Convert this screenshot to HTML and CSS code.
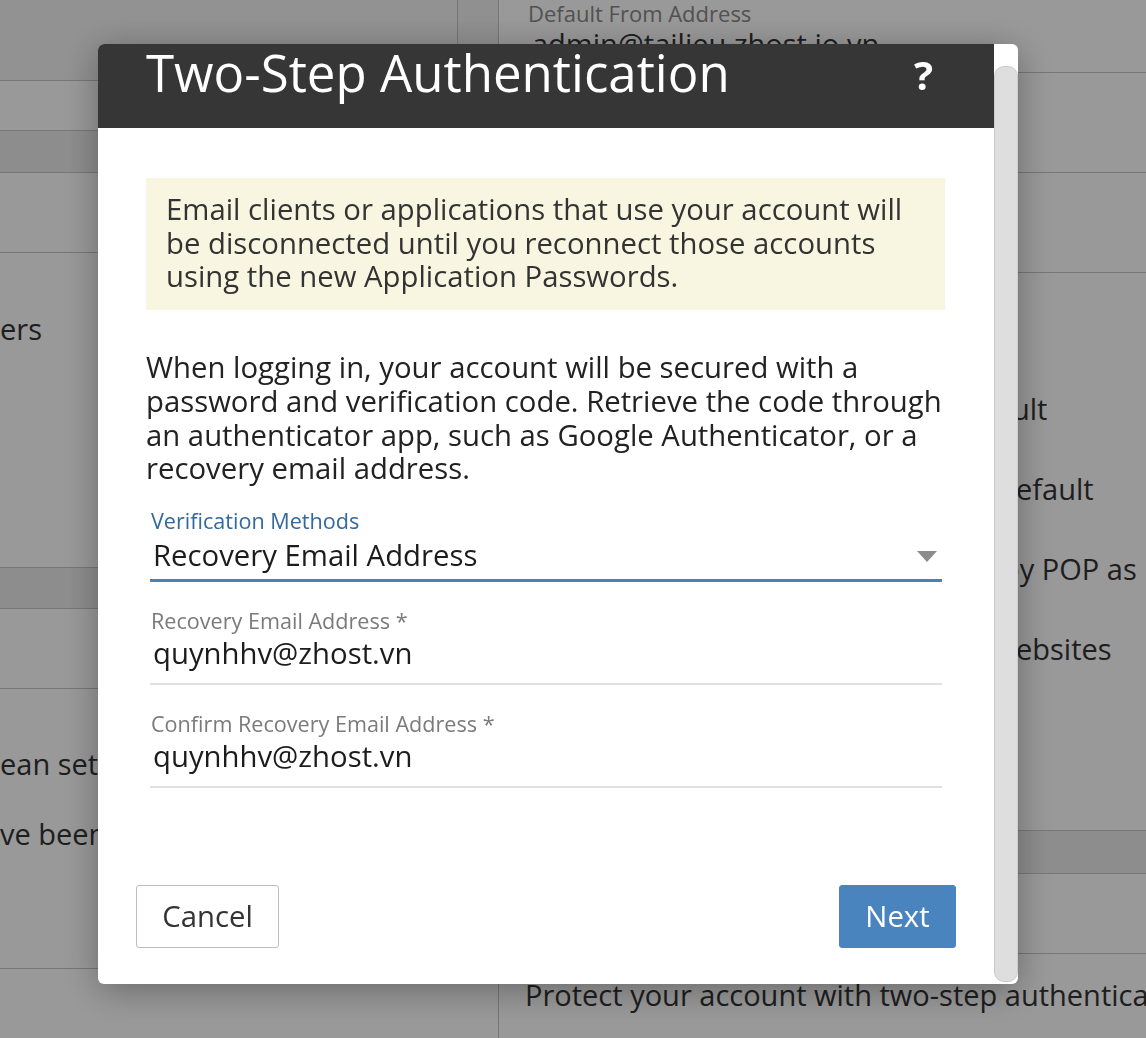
FILE: index.html
```html
<!DOCTYPE html>
<html lang="en">
<head>
<meta charset="utf-8">
<title>Two-Step Authentication</title>
<link rel="stylesheet" href="styles.css">
</head>
<body>
<div class="page">
  <aside class="left-col">
    <div class="l-head"></div>
    <div class="l-row-a"></div>
    <div class="l-band"></div>
    <div class="l-row-b"></div>
    <div class="l-section">
      <p class="frag">ers</p>
    </div>
    <div class="l-band l-band-2"></div>
    <div class="l-row-b"></div>
    <div class="l-section l-section-2">
      <p class="frag">ean settings</p>
      <p class="frag frag-gap">ve been read</p>
    </div>
  </aside>
  <div class="gutter"><div class="gutter-top"></div></div>
  <main class="right-col">
    <div class="r-head">
      <div class="r-label">Default From Address</div>
      <div class="r-value">admin@tailieu.zhost.io.vn</div>
    </div>
    <div class="r-row"></div>
    <div class="r-row"></div>
    <div class="r-list">
      <p class="frag r-item r-item-a">ult</p>
      <p class="frag r-item">efault</p>
      <p class="frag r-item r-item-b">by POP as read</p>
      <p class="frag r-item">ebsites</p>
    </div>
    <div class="r-band"></div>
    <div class="r-row r-row-2"></div>
    <div class="r-foot">
      <p class="frag">Protect your account with two-step authentication</p>
    </div>
  </main>
</div>

<div class="overlay"></div>

<div class="dialog" role="dialog" aria-labelledby="dlg-title">
  <div class="dialog-main">
    <header class="dialog-head">
      <h1 class="dialog-title" id="dlg-title">Two-Step Authentication</h1>
      <span class="help">?</span>
    </header>
    <div class="dialog-body">
      <p class="notice">Email clients or applications that use your account will be disconnected until you reconnect those accounts using the new Application Passwords.</p>
      <p class="intro">When logging in, your account will be secured with a password and verification code. Retrieve the code through an authenticator app, such as Google Authenticator, or a recovery email address.</p>

      <div class="field field-select">
        <label class="field-label field-label-active">Verification Methods</label>
        <div class="field-value select-value">
          <span>Recovery Email Address</span>
          <svg class="caret" width="20" height="11" viewBox="0 0 20 11" aria-hidden="true"><polygon points="0,0 20,0 10,11" fill="#8c8c8c"/></svg>
        </div>
      </div>

      <div class="field">
        <label class="field-label">Recovery Email Address *</label>
        <div class="field-value input-value">quynhhv@zhost.vn</div>
      </div>

      <div class="field">
        <label class="field-label">Confirm Recovery Email Address *</label>
        <div class="field-value input-value">quynhhv@zhost.vn</div>
      </div>
    </div>
    <footer class="dialog-foot">
      <button class="btn btn-cancel" type="button">Cancel</button>
      <button class="btn btn-next" type="button">Next</button>
    </footer>
  </div>
  <div class="scrollbar"><div class="thumb"></div></div>
</div>
</body>
</html>
```

FILE: styles.css
```css
* { box-sizing: border-box; }

html, body {
  margin: 0;
  padding: 0;
}

body {
  width: 1146px;
  height: 1038px;
  overflow: hidden;
  background: #fff;
  color: #333;
  font-family: "Open Sans", "Noto Sans", "DejaVu Sans", sans-serif;
}

/* ---------- background page ---------- */
.page {
  display: flex;
  height: 1038px;
}

.left-col {
  width: 457px;
  flex: none;
  display: flex;
  flex-direction: column;
  overflow: hidden;
}

.gutter {
  width: 42px;
  flex: none;
  border-right: 1px solid #c6c6c6;
}
.gutter-top {
  height: 73px;
  background: #f0f0f0;
  border-left: 1px solid #c6c6c6;
}

.right-col {
  flex: 1;
  min-width: 0;
  display: flex;
  flex-direction: column;
  overflow: hidden;
}

.frag {
  margin: 0;
  font-size: 29px;
  line-height: 34px;
  color: #333;
  white-space: nowrap;
}

.l-head {
  height: 81px;
  background: #f3f3f3;
  border-bottom: 1px solid #c8c8c8;
}
.l-row-a {
  height: 50px;
  border-bottom: 1px solid #c8c8c8;
}
.l-band {
  height: 42px;
  background: #ececec;
  border-bottom: 1px solid #c8c8c8;
}
.l-band-2 { height: 41px; }
.l-row-b {
  height: 80px;
  border-bottom: 1px solid #c8c8c8;
}
.l-section {
  height: 315px;
  padding-top: 59px;
  border-bottom: 1px solid #c8c8c8;
}
.l-section-2 {
  height: 280px;
  padding-top: 58px;
}
.frag-gap { margin-top: 36px; }

.r-head {
  height: 73px;
  padding-left: 29px;
  border-bottom: 1px solid #c8c8c8;
}
.r-label {
  font-size: 22px;
  line-height: 26px;
  color: #888;
}
.r-value {
  margin-top: 1px;
  padding-left: 4px;
  font-size: 29px;
  line-height: 34px;
  color: #333;
  white-space: nowrap;
}
.r-row {
  height: 100px;
  border-bottom: 1px solid #c8c8c8;
}
.r-row-2 { height: 80px; }
.r-list {
  height: 558px;
  padding-top: 119px;
  border-bottom: 1px solid #c8c8c8;
  display: flex;
  flex-direction: column;
  gap: 46px;
}
.r-item { padding-left: 517px; }
.r-item-a { padding-left: 513px; }
.r-item-b { padding-left: 503px; }
.r-band {
  height: 43px;
  background: #ececec;
  border-bottom: 1px solid #c8c8c8;
}
.r-foot {
  padding: 24px 0 0 26px;
}

/* ---------- modal ---------- */
.overlay {
  position: fixed;
  inset: 0;
  background: rgba(0, 0, 0, 0.4);
}

.dialog {
  position: fixed;
  left: 98px;
  top: 44px;
  width: 920px;
  height: 940px;
  display: flex;
  background: #fff;
  border-radius: 6px;
  overflow: hidden;
  box-shadow: 0 6px 36px rgba(0, 0, 0, 0.32);
}

.dialog-main {
  width: 896px;
  flex: none;
  display: flex;
  flex-direction: column;
}

.dialog-head {
  height: 84px;
  flex: none;
  display: flex;
  justify-content: space-between;
  align-items: flex-start;
  padding: 0 61px 0 48px;
  background: #363636;
  color: #fff;
}

.dialog-title {
  margin: 0;
  font-size: 51px;
  font-weight: 400;
  line-height: 56px;
}

.help {
  margin-top: 3px;
  font-size: 40px;
  font-weight: 700;
  line-height: 56px;
}

.dialog-body {
  padding: 50px 48px 0;
}

.notice {
  margin: 0 1px 0 0;
  padding: 15px 18px 16px 20px;
  background: #f8f6e1;
  font-size: 29.3px;
  line-height: 33.7px;
  color: #333;
}

.intro {
  margin: 41px 0 0;
  font-size: 29.3px;
  line-height: 33.7px;
  color: #222;
}

.field {
  margin: 26px 4px 0;
}
.field-select {
  margin-top: 21.7px;
}

.field-label {
  display: block;
  padding-left: 1px;
  font-size: 21.6px;
  line-height: 26px;
  color: #7b7b7b;
}
.field-label-active {
  color: #33699b;
}

.field-value {
  font-size: 29.3px;
  line-height: 34px;
  color: #1c1c1c;
  padding-left: 3px;
}

.select-value {
  display: flex;
  justify-content: space-between;
  align-items: center;
  margin-top: 4px;
  padding-bottom: 7px;
  border-bottom: 3px solid #4a80b4;
}

.caret {
  margin: 3px 5px 0 0;
}

.input-value {
  margin-top: 2px;
  padding-bottom: 13px;
  border-bottom: 2px solid #e0e0e0;
}

.dialog-foot {
  margin-top: auto;
  display: flex;
  justify-content: space-between;
  padding: 0 38px 36px;
}

.btn {
  height: 63px;
  padding: 0;
  font-family: inherit;
  font-size: 29.3px;
  line-height: 1;
  border-radius: 3px;
  cursor: pointer;
}

.btn-cancel {
  width: 143px;
  background: #fff;
  border: 1px solid #bdbdbd;
  color: #333;
}

.btn-next {
  width: 117px;
  background: #4a84be;
  border: 1px solid #4a84be;
  color: #fff;
}

.scrollbar {
  width: 24px;
  flex: none;
  display: flex;
  padding: 22px 0 2px;
}

.thumb {
  flex: 1;
  background: #dedede;
  border: 1px solid #cbcbcb;
  border-radius: 10px;
}
```
